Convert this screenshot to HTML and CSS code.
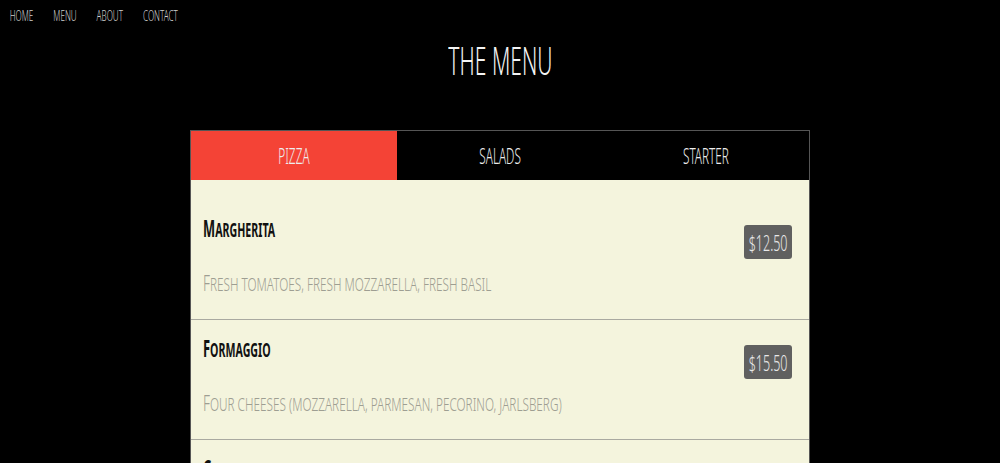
FILE: index.html
```html
<!DOCTYPE html>
<html lang="en">
<head>
<meta charset="utf-8">
<title>The Menu</title>
<link rel="stylesheet" href="styles.css">
</head>
<body>
<nav class="topnav">
  <a class="navlink" href="#">HOME</a>
  <a class="navlink" href="#">MENU</a>
  <a class="navlink" href="#">ABOUT</a>
  <a class="navlink" href="#">CONTACT</a>
</nav>
<h1 class="title"><span class="title-text">THE MENU</span></h1>
<section class="menu">
  <div class="tabs">
    <div class="tab tab-active"><span class="tab-label">PIZZA</span></div>
    <div class="tab"><span class="tab-label">SALADS</span></div>
    <div class="tab"><span class="tab-label">STARTER</span></div>
  </div>
  <div class="items">
    <div class="item">
      <div class="item-text">
        <h2 class="item-name">Margherita</h2>
        <p class="item-desc">Fresh tomatoes, fresh mozzarella, fresh basil</p>
      </div>
      <span class="price"><span class="price-text">$12.50</span></span>
    </div>
    <div class="item">
      <div class="item-text">
        <h2 class="item-name">Formaggio</h2>
        <p class="item-desc">Four cheeses (mozzarella, parmesan, pecorino, jarlsberg)</p>
      </div>
      <span class="price"><span class="price-text">$15.50</span></span>
    </div>
    <div class="item">
      <div class="item-text">
        <h2 class="item-name">Chicken</h2>
        <p class="item-desc">Fresh tomatoes, mozzarella, chicken, onions</p>
      </div>
      <span class="price"><span class="price-text">$17.00</span></span>
    </div>
  </div>
</section>
</body>
</html>
```
FILE: styles.css
```css
html, body {
  margin: 0;
  padding: 0;
  background: #000;
  font-family: "Noto Sans", "Open Sans", "DejaVu Sans Condensed", sans-serif;
  font-weight: 300;
}
.topnav {
  display: flex;
  gap: 37px;
  height: 30px;
  align-items: center;
  padding-left: 18px;
  transform: scaleX(0.54);
  transform-origin: left center;
}
.navlink {
  color: #d0d0d0;
  text-decoration: none;
  font-size: 15px;
}
.title {
  margin: 7px 0 0;
  height: 93px;
  text-align: center;
  color: #f4f4f4;
  font-weight: 300;
  font-size: 39px;
  line-height: 46px;
}
.title-text {
  display: inline-block;
  transform: scaleX(0.54);
}
.menu {
  width: 618px;
  margin: 0 auto;
  border: 1px solid #555;
  border-bottom: none;
  background: #f4f4dd;
}
.tabs {
  display: grid;
  grid-template-columns: repeat(3, 1fr);
  height: 49px;
  background: #000;
}
.tab {
  display: flex;
  align-items: center;
  justify-content: center;
  color: #eee;
  font-size: 21px;
}
.tab-label {
  display: inline-block;
  transform: scaleX(0.56);
}
.tab-active {
  background: #f44336;
}
.items {
  padding-top: 20px;
}
.item {
  display: flex;
  justify-content: space-between;
  align-items: flex-start;
  height: 120px;
  box-sizing: border-box;
  padding: 0 17px 0 12px;
  border-bottom: 1px solid #a9a9a0;
}
.item-text {
  flex: 1 1 0;
  min-width: 0;
  white-space: nowrap;
}
.item-name {
  margin: 0;
  padding-top: 16px;
  font-size: 19px;
  line-height: 24px;
  text-transform: uppercase;
  color: #111;
  font-weight: 700;
  transform: scaleX(0.56);
  transform-origin: left top;
}
.item-name::first-letter {
  font-size: 23px;
}
.item-desc {
  margin: 28px 0 0;
  font-size: 19px;
  line-height: 24px;
  text-transform: uppercase;
  color: #9e9e92;
  transform: scaleX(0.62);
  transform-origin: left top;
}
.item-desc::first-letter {
  font-size: 22px;
}
.price {
  flex-shrink: 0;
  display: flex;
  align-items: center;
  justify-content: center;
  width: 48px;
  height: 34px;
  margin-top: 25px;
  background: #606060;
  color: #e8e8e8;
  font-size: 22px;
  border-radius: 3px;
}
.price-text {
  display: inline-block;
  transform: scaleX(0.57);
}
```
